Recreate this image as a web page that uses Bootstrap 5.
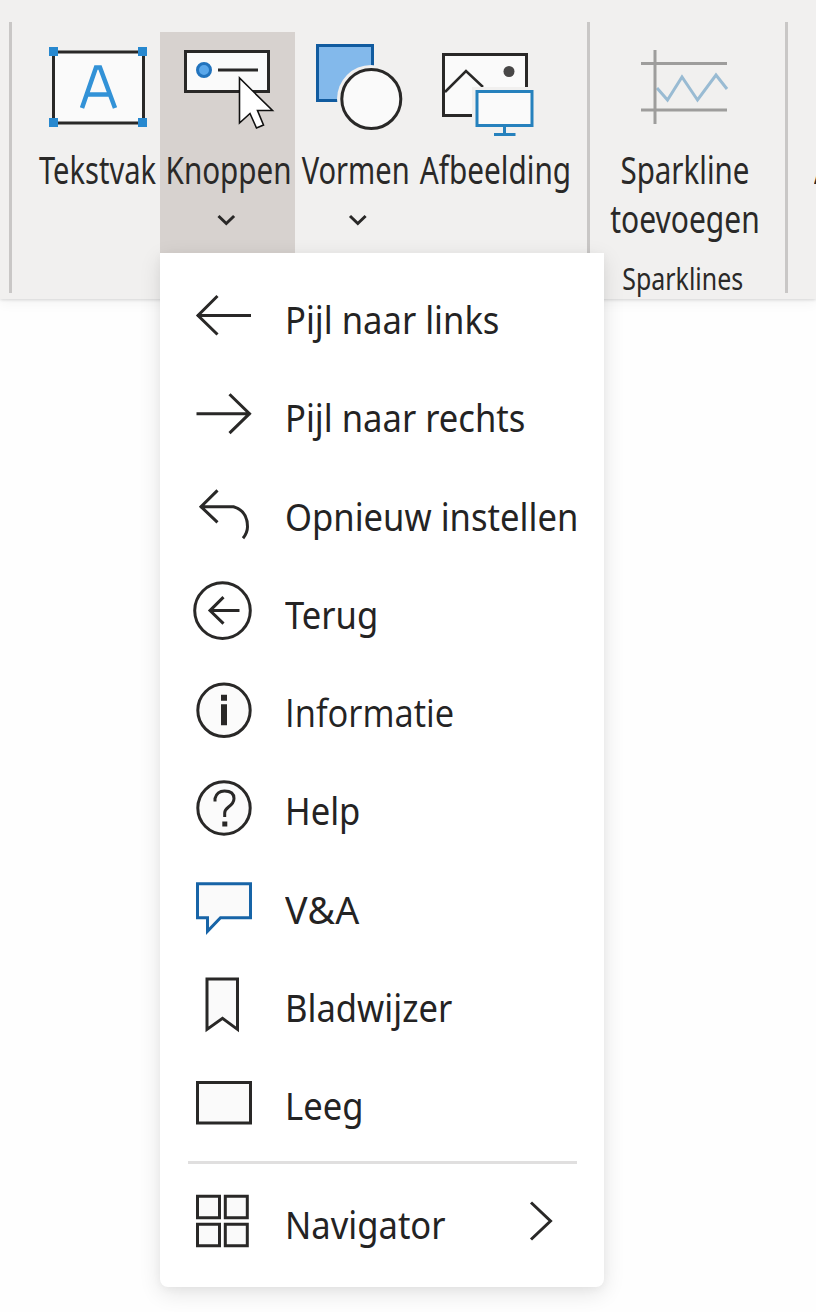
<!DOCTYPE html>
<html lang="nl">
<head>
<meta charset="utf-8">
<meta name="viewport" content="width=device-width, initial-scale=1">
<title>Invoegen</title>
<link href="https://cdn.jsdelivr.net/npm/bootstrap@5.3.0/dist/css/bootstrap.min.css" rel="stylesheet">
<style>
body{font-family:"Noto Sans","Open Sans",sans-serif;color:#2a2928;background:#fefefe;height:1312px;overflow:hidden}
svg{display:block;flex:none;overflow:visible;fill:none;stroke:#292827;stroke-width:3}
.ribbon{height:299px;background:#f1f0ef;box-shadow:0 1px 3px #0002,0 4px 12px #0000000c;padding-left:9px}
.rule{width:3px;height:271px;margin-top:22px;background:#c9c7c6;flex:none}
.tool{height:221px;margin-top:32px;flex:none;border:0;background:none;padding:0;color:inherit}
.tool.active{background:#d7d2cf}
.caption{font-size:37.5px;line-height:49px;white-space:nowrap;position:relative;top:1.6px;transform:scaleX(.775)}
.group-name{font-size:30px;line-height:40px;margin-top:17.6px;margin-left:-3px;transform:scaleX(.83)}
.w-text{width:125px;margin-left:23px}.w-button{width:135px}.w-shape{width:122px}.w-image{width:156px;margin-right:14px}.w-spark{width:189px;margin-right:6px}
.tool-menu{display:block;left:160px;top:253px;width:444px;height:1034px;padding:17px 0 0;border:0;border-radius:0 0 8px 8px;background:#fff;box-shadow:0 6px 22px #0000001c,0 2px 8px #0000000a}
.tool-menu .dropdown-item{height:98.3px;padding:0 0 0 30px;color:#242323;font-size:39px;line-height:97.3px}
.item-text{margin-left:25px;transform:scaleX(.887);transform-origin:left;white-space:nowrap}
.plain-i{font-family:"Open Sans",sans-serif}
.wide-text{transform:scaleX(.965)}
.tool-menu .dropdown-divider{height:3px;margin:6.8px 27px 11px 28px;border:0;background:#e0dfdf;opacity:1}
</style>
</head>
<body>
<header class="ribbon d-flex align-items-start position-relative">
  <div class="rule"></div>
  <button class="tool w-text d-flex flex-column align-items-center">
    <svg width="125" height="111" viewBox="35 32 125 111"><rect x="53.5" y="52" width="90" height="71" fill="#fafafa"/><g fill="#2788cf" stroke="none"><path d="M49 47h9v9h-9zM138 47h9v9h-9zM49 118h9v9h-9zM138 118h9v9h-9z"/></g><path d="M82 108L96 67.500h4l15 40.500M87 94.500h22" stroke="#3292d7" stroke-width="4.500"/></svg>
    <span class="caption">Tekstvak</span>
  </button>
  <button class="tool active w-button d-flex flex-column align-items-center">
    <svg width="135" height="111" viewBox="160 32 135 111"><rect x="185.500" y="51.500" width="83" height="40" fill="#fafafa"/><circle cx="204" cy="70" r="6.500" fill="#5aa7ea" stroke="#2273bd"/><path d="M218 70h40"/><path d="M239.500 78v45l10.500-9.500 6.500 14.500 7-3-6-14.500h15z" fill="#fff" stroke="#111" stroke-width="1.600"/></svg>
    <span class="caption" style="transform:translateX(.8px) scaleX(.79)">Knoppen</span>
    <svg width="135" height="40" viewBox="160 192 135 40"><path d="M218.500 216l7.800 7.500 7.800-7.500"/></svg>
  </button>
  <button class="tool w-shape d-flex flex-column align-items-center">
    <svg width="122" height="111" viewBox="295 32 122 111"><rect x="317.500" y="45.500" width="55" height="55" fill="#83b9eb" stroke="#115b9f"/><circle cx="371" cy="99" r="34" fill="#f1f0ef" stroke="none"/><circle cx="371.300" cy="99" r="29.500" fill="#fafafa"/></svg>
    <span class="caption">Vormen</span>
    <svg width="122" height="40" viewBox="295 192 122 40"><path d="M350 216l7.800 7.500 7.800-7.500"/></svg>
  </button>
  <button class="tool w-image d-flex flex-column align-items-center">
    <svg width="156" height="111" viewBox="417 32 156 111"><path d="M443.500 54.500h83v61h-83z" fill="#fafafa"/><path d="M445 92l21-21 17 16" stroke-width="2.500"/><circle cx="509" cy="71.500" r="5.500" fill="#484747" stroke="none"/><path d="M472 87h65v52h-65z" fill="#f1f0ef" stroke="none"/><path d="M477 91.500h55v34h-55zM504.500 126v9M494 134.500h21.500" stroke="#2681bd" fill="#fafafa"/></svg>
    <span class="caption" style="transform:scaleX(.793)">Afbeelding</span>
  </button>
  <div class="rule"></div>
  <div class="tool w-spark d-flex flex-column align-items-center">
    <svg width="189" height="111" viewBox="590 32 189 111"><path d="M657 88l10.500 12L682 77l15.500 23L716 75l11 14" stroke="#99bbd3"/><path d="M641 63.500h86M641 110h86M655 50v74" stroke="#9e9d9c"/></svg>
    <span class="caption" style="transform:scaleX(.787)">Sparkline</span>
    <span class="caption" style="transform:translateX(.5px) scaleX(.8)">toevoegen</span>
    <span class="group-name">Sparklines</span>
  </div>
  <div class="rule"></div>
  <div class="position-absolute end-0 top-0 overflow-hidden" style="width:2px;height:290px"><span class="caption d-block" style="margin-top:143px;transform-origin:left">A</span></div>

  <div class="dropdown-menu tool-menu">
    <a class="dropdown-item d-flex"><svg width="70" height="98.300" viewBox="190 270 70 98.300"><path d="M251 315.500h-54M217.500 296l-19.500 19.500 19.500 19"/></svg><span class="item-text">Pijl naar links</span></a>
    <a class="dropdown-item d-flex"><svg width="70" height="98.300" viewBox="190 368.300 70 98.300"><path d="M196.500 414h54M229.500 394.500l20 19.500-20 19.500"/></svg><span class="item-text">Pijl naar rechts</span></a>
    <a class="dropdown-item d-flex"><svg width="70" height="98.300" viewBox="190 466.600 70 98.300"><path d="M217.500 490l-16.500 16.300 16.500 15.700M200 506.300h33.500q14 4 14 20 0 6-4.500 11.500"/></svg><span class="item-text">Opnieuw instellen</span></a>
    <a class="dropdown-item d-flex"><svg width="70" height="98.300" viewBox="190 564.900 70 98.300"><circle cx="222.500" cy="610.500" r="27.800"/><path d="M239.500 610.500H210M223.500 597L210 610.500l13.500 13"/></svg><span class="item-text">Terug</span></a>
    <a class="dropdown-item d-flex"><svg width="70" height="98.300" viewBox="190 663.200 70 98.300"><circle cx="224" cy="710.500" r="26.200" fill="#fbfbfb"/><path d="M221 695h6v6h-6zM221 704.500h6v21h-6z" fill="#292827" stroke="none"/></svg><span class="item-text plain-i">Informatie</span></a>
    <a class="dropdown-item d-flex"><svg width="70" height="98.300" viewBox="190 761.500 70 98.300"><circle cx="224" cy="808.500" r="26.200" fill="#fbfbfb"/><path d="M215 802v-3q2-7.500 9.500-7.500 9.500 0 9.500 7.500 0 4.500-5.500 8.500-3.800 3-3.800 6v4"/><path d="M222.300 822h5v5h-5z" fill="#292827" stroke="none"/></svg><span class="item-text">Help</span></a>
    <a class="dropdown-item d-flex"><svg width="70" height="98.300" viewBox="190 859.800 70 98.300"><path d="M197.500 883.500h53v34h-30l-13 13.500v-13.500h-10z" fill="#fafafa" stroke="#1764a7"/></svg><span class="item-text wide-text">V&amp;A</span></a>
    <a class="dropdown-item d-flex"><svg width="70" height="98.300" viewBox="190 958.100 70 98.300"><path d="M207 1029.500v-50.500h30.500v50.500l-15-11z" fill="#fafafa"/></svg><span class="item-text">Bladwijzer</span></a>
    <a class="dropdown-item d-flex"><svg width="70" height="98.300" viewBox="190 1056.400 70 98.300"><path d="M197.500 1083h53v40.500h-53z" fill="#fafafa"/></svg><span class="item-text">Leeg</span></a>
    <hr class="dropdown-divider">
    <a class="dropdown-item d-flex"><svg width="70" height="98.300" viewBox="190 1175.500 70 98.300"><path d="M197.500 1196.800h22v21.500h-22zM225.300 1196.800h22v21.500h-22zM197.500 1224.800h22v21.500h-22zM225.300 1224.800h22v21.500h-22z" fill="#fafafa"/></svg><span class="item-text">Navigator</span><svg class="ms-auto me-4" width="70" height="98.300" viewBox="510 1175.500 70 98.300"><path d="M531 1203l19.500 18.500L531 1240"/></svg></a>
  </div>
</header>
<script src="https://cdn.jsdelivr.net/npm/bootstrap@5.3.0/dist/js/bootstrap.bundle.min.js"></script>
</body>
</html>
